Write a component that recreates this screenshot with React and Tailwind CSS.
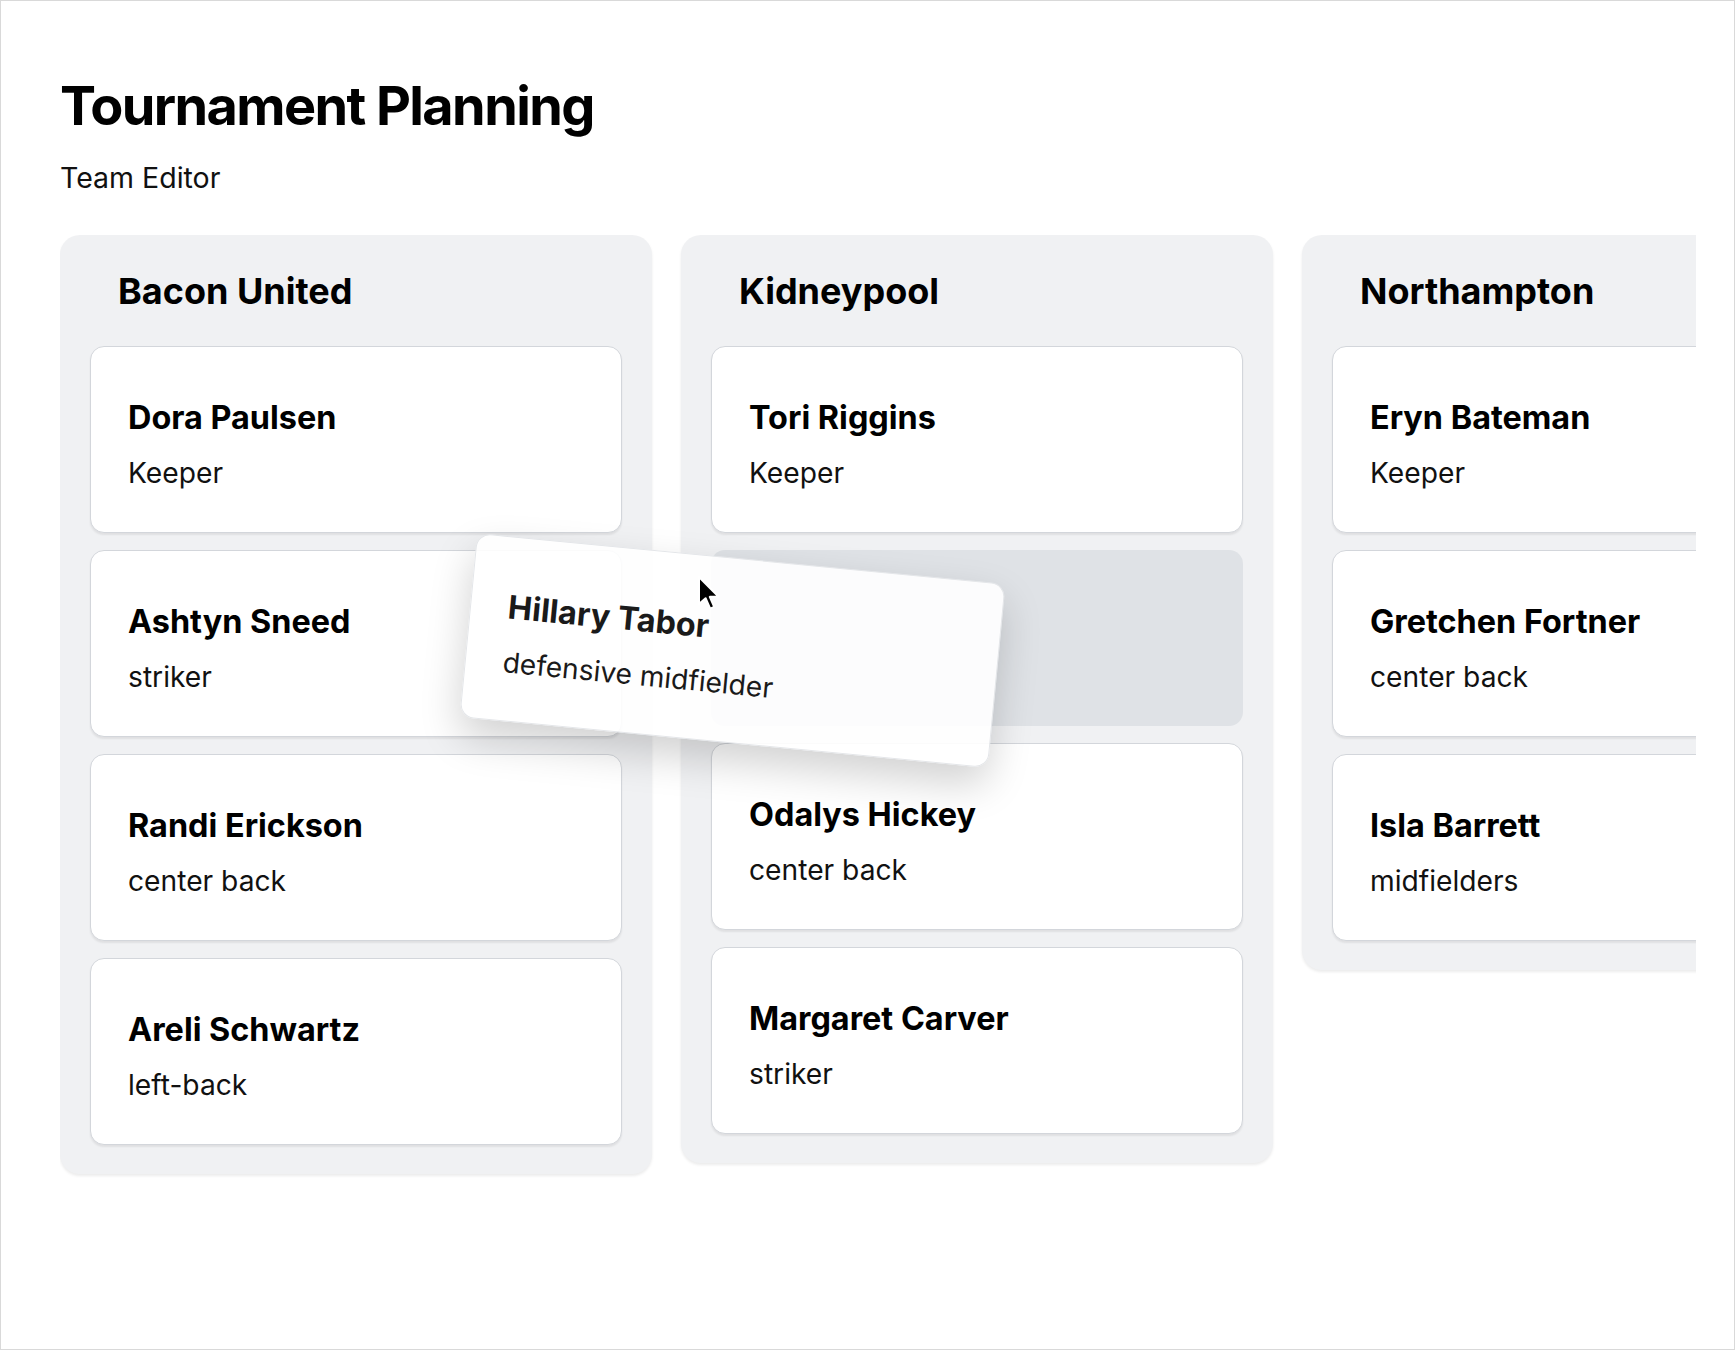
const teams = [
  {
    name: 'Bacon United',
    players: [
      { name: 'Dora Paulsen', role: 'Keeper' },
      { name: 'Ashtyn Sneed', role: 'striker' },
      { name: 'Randi Erickson', role: 'center back' },
      { name: 'Areli Schwartz', role: 'left-back' },
    ],
  },
  {
    name: 'Kidneypool',
    players: [
      { name: 'Tori Riggins', role: 'Keeper' },
      { placeholder: true },
      { name: 'Odalys Hickey', role: 'center back' },
      { name: 'Margaret Carver', role: 'striker' },
    ],
  },
  {
    name: 'Northampton',
    players: [
      { name: 'Eryn Bateman', role: 'Keeper' },
      { name: 'Gretchen Fortner', role: 'center back' },
      { name: 'Isla Barrett', role: 'midfielders' },
    ],
  },
];

function PlayerCard({ player }) {
  if (player.placeholder) {
    return <div className="h-[176px] rounded-[14px] bg-[#dfe2e6]" />;
  }
  return (
    <div className="h-[187px] shrink-0 rounded-[14px] border border-[#d3d6db] bg-white pl-[37px] pt-[51px] shadow-[0_2px_2px_rgba(0,0,0,0.07)]">
      <div className="text-[32.4px] font-bold leading-[39px] text-black">{player.name}</div>
      <div className="mt-[19px] text-[28.2px] leading-[35px] text-[#111]">{player.role}</div>
    </div>
  );
}

function TeamColumn({ team }) {
  return (
    <div className="w-[592px] shrink-0 rounded-[20px] bg-[#f0f1f3] px-[30px] pb-[29px] pt-[34px] shadow-[0_2px_3px_rgba(0,0,0,0.08)]">
      <h2 className="px-[28px] text-[36px] font-bold leading-[44px] text-black">{team.name}</h2>
      <div className="mt-[33px] flex flex-col gap-[17px]">
        {team.players.map((p, i) => (
          <PlayerCard key={i} player={p} />
        ))}
      </div>
    </div>
  );
}

export default function App() {
  return (
    <div
      className="relative h-[1350px] w-[1735px] overflow-hidden border border-[#d9d9d9] bg-white"
      style={{ fontFamily: 'Inter, "Noto Sans", sans-serif' }}
    >
      <div className="pl-[59px] pt-[70px]">
        <h1 className="text-[54px] font-bold leading-[70px] tracking-[-1.6px] text-black">Tournament Planning</h1>
        <p className="mt-[19px] text-[28.5px] leading-[35px] text-[#111]">Team Editor</p>

        <div className="mt-[40px] w-[1636px] overflow-hidden pb-[8px]">
          <div className="flex items-start gap-[29px]">
            {teams.map((t) => (
              <TeamColumn key={t.name} team={t} />
            ))}
          </div>
        </div>
      </div>

      {/* card being dragged */}
      <div className="absolute left-[466px] top-[557px] h-[185px] w-[531px] rotate-[5.5deg] rounded-[14px] border border-[#e4e6e9] bg-white/90 pl-[37px] pt-[50px] shadow-[0_18px_40px_rgba(0,0,0,0.18)]">
        <div className="text-[32.4px] font-bold leading-[39px] text-[#1a1a1a]">Hillary Tabor</div>
        <div className="mt-[19px] text-[28.2px] leading-[35px] text-[#1a1a1a]">defensive midfielder</div>
      </div>

      {/* mouse pointer */}
      <svg className="absolute left-[696px] top-[574px]" width="24" height="36" viewBox="0 0 12 18">
        <path
          d="M1 1 L1 14.5 L4.3 11.6 L6.6 16.8 L8.6 15.9 L6.4 10.9 L10.8 10.9 Z"
          fill="#000"
          stroke="#fff"
          strokeWidth="1"
          strokeLinejoin="round"
        />
      </svg>
    </div>
  );
}
